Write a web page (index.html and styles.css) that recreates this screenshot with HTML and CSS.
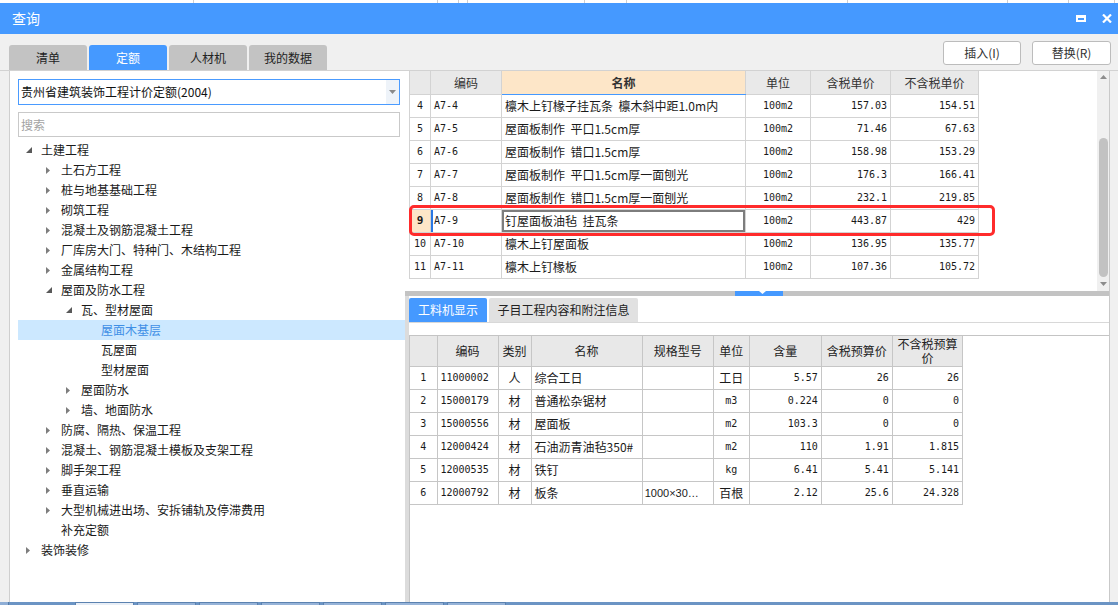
FILE: index.html
```html
<!DOCTYPE html>
<html lang="zh-CN">
<head>
<meta charset="utf-8">
<title>查询</title>
<link rel="stylesheet" href="styles.css">
</head>
<body>
<div class="app">
  <div class="topstrip"><span></span><span></span><span></span><span></span><span></span><span></span><span></span><span></span><span></span><span></span><span></span></div>
  <div class="titlebar">
    <span class="title">查询</span>
    <div class="winctl">
      <svg class="ico-max" width="10" height="7" viewBox="0 0 10 7"><path fill="#fff" fill-rule="evenodd" d="M0 0H10V7H0Z M2 3H8V5H2Z"/></svg>
      <svg class="ico-close" width="10" height="9" viewBox="0 0 10 9"><path d="M1 0.5L9 8.5M9 0.5L1 8.5" stroke="#fff" stroke-width="2.2"/></svg>
    </div>
  </div>
  <div class="toolbar">
    <div class="tabs">
      <div class="tab">清单</div>
      <div class="tab active">定额</div>
      <div class="tab">人材机</div>
      <div class="tab">我的数据</div>
    </div>
    <div class="btns">
      <div class="btn">插入(I)</div>
      <div class="btn btn2">替换(R)</div>
    </div>
  </div>
  <div class="main">
    <div class="left">
      <div class="select">
        <div class="select-text">贵州省建筑装饰工程计价定额(2004)</div>
        <div class="select-arrow"><svg width="7" height="4" viewBox="0 0 7 4"><path d="M0 0H7L3.5 4Z" fill="#8a8a8a"/></svg></div>
      </div>
      <div class="search">搜索</div>
      <div class="tree">
        <div class="node l0"><span class="tog"><svg width="6" height="6" viewBox="0 0 6 6"><path d="M6 0V6H0Z" fill="#595959"/></svg></span><span>土建工程</span></div>
        <div class="node l1"><span class="tog"><svg width="4" height="7" viewBox="0 0 4 7"><path d="M0 0L4 3.5L0 7Z" fill="#7d7d7d"/></svg></span><span>土石方工程</span></div>
        <div class="node l1"><span class="tog"><svg width="4" height="7" viewBox="0 0 4 7"><path d="M0 0L4 3.5L0 7Z" fill="#7d7d7d"/></svg></span><span>桩与地基基础工程</span></div>
        <div class="node l1"><span class="tog"><svg width="4" height="7" viewBox="0 0 4 7"><path d="M0 0L4 3.5L0 7Z" fill="#7d7d7d"/></svg></span><span>砌筑工程</span></div>
        <div class="node l1"><span class="tog"><svg width="4" height="7" viewBox="0 0 4 7"><path d="M0 0L4 3.5L0 7Z" fill="#7d7d7d"/></svg></span><span>混凝土及钢筋混凝土工程</span></div>
        <div class="node l1"><span class="tog"><svg width="4" height="7" viewBox="0 0 4 7"><path d="M0 0L4 3.5L0 7Z" fill="#7d7d7d"/></svg></span><span>厂库房大门、特种门、木结构工程</span></div>
        <div class="node l1"><span class="tog"><svg width="4" height="7" viewBox="0 0 4 7"><path d="M0 0L4 3.5L0 7Z" fill="#7d7d7d"/></svg></span><span>金属结构工程</span></div>
        <div class="node l1"><span class="tog"><svg width="6" height="6" viewBox="0 0 6 6"><path d="M6 0V6H0Z" fill="#595959"/></svg></span><span>屋面及防水工程</span></div>
        <div class="node l2"><span class="tog"><svg width="6" height="6" viewBox="0 0 6 6"><path d="M6 0V6H0Z" fill="#595959"/></svg></span><span>瓦、型材屋面</span></div>
        <div class="node l3 sel"><span class="tog"></span><span>屋面木基层</span></div>
        <div class="node l3"><span class="tog"></span><span>瓦屋面</span></div>
        <div class="node l3"><span class="tog"></span><span>型材屋面</span></div>
        <div class="node l2"><span class="tog"><svg width="4" height="7" viewBox="0 0 4 7"><path d="M0 0L4 3.5L0 7Z" fill="#7d7d7d"/></svg></span><span>屋面防水</span></div>
        <div class="node l2"><span class="tog"><svg width="4" height="7" viewBox="0 0 4 7"><path d="M0 0L4 3.5L0 7Z" fill="#7d7d7d"/></svg></span><span>墙、地面防水</span></div>
        <div class="node l1"><span class="tog"><svg width="4" height="7" viewBox="0 0 4 7"><path d="M0 0L4 3.5L0 7Z" fill="#7d7d7d"/></svg></span><span>防腐、隔热、保温工程</span></div>
        <div class="node l1"><span class="tog"><svg width="4" height="7" viewBox="0 0 4 7"><path d="M0 0L4 3.5L0 7Z" fill="#7d7d7d"/></svg></span><span>混凝土、钢筋混凝土模板及支架工程</span></div>
        <div class="node l1"><span class="tog"><svg width="4" height="7" viewBox="0 0 4 7"><path d="M0 0L4 3.5L0 7Z" fill="#7d7d7d"/></svg></span><span>脚手架工程</span></div>
        <div class="node l1"><span class="tog"><svg width="4" height="7" viewBox="0 0 4 7"><path d="M0 0L4 3.5L0 7Z" fill="#7d7d7d"/></svg></span><span>垂直运输</span></div>
        <div class="node l1"><span class="tog"><svg width="4" height="7" viewBox="0 0 4 7"><path d="M0 0L4 3.5L0 7Z" fill="#7d7d7d"/></svg></span><span>大型机械进出场、安拆铺轨及停滞费用</span></div>
        <div class="node l1"><span class="tog"></span><span>补充定额</span></div>
        <div class="node l0"><span class="tog"><svg width="4" height="7" viewBox="0 0 4 7"><path d="M0 0L4 3.5L0 7Z" fill="#7d7d7d"/></svg></span><span>装饰装修</span></div>
      </div>
    </div>
    <div class="right">
      <div class="upper">
        <div class="gridwrap">
          <table class="g1">
            <colgroup><col class="c1"><col class="c2"><col class="c3"><col class="c4"><col class="c5"><col class="c6"></colgroup>
            <thead>
              <tr><th></th><th>编码</th><th class="hname">名称</th><th>单位</th><th>含税单价</th><th>不含税单价</th></tr>
            </thead>
            <tbody>
              <tr><td class="rn">4</td><td class="mono">A7-4</td><td>檩木上钉椽子挂瓦条&nbsp; 檩木斜中距1.0m内</td><td class="mono ctr">100m2</td><td class="mono r">157.03</td><td class="mono r">154.51</td></tr>
              <tr><td class="rn">5</td><td class="mono">A7-5</td><td>屋面板制作&nbsp; 平口1.5cm厚</td><td class="mono ctr">100m2</td><td class="mono r">71.46</td><td class="mono r">67.63</td></tr>
              <tr><td class="rn">6</td><td class="mono">A7-6</td><td>屋面板制作&nbsp; 错口1.5cm厚</td><td class="mono ctr">100m2</td><td class="mono r">158.98</td><td class="mono r">153.29</td></tr>
              <tr><td class="rn">7</td><td class="mono">A7-7</td><td>屋面板制作&nbsp; 平口1.5cm厚一面刨光</td><td class="mono ctr">100m2</td><td class="mono r">176.3</td><td class="mono r">166.41</td></tr>
              <tr><td class="rn">8</td><td class="mono">A7-8</td><td>屋面板制作&nbsp; 错口1.5cm厚一面刨光</td><td class="mono ctr">100m2</td><td class="mono r">232.1</td><td class="mono r">219.85</td></tr>
              <tr class="cur"><td class="rn rn-cur">9</td><td class="mono code-cur">A7-9</td><td class="name-cur">钉屋面板油毡&nbsp; 挂瓦条</td><td class="mono ctr">100m2</td><td class="mono r">443.87</td><td class="mono r">429</td></tr>
              <tr><td class="rn">10</td><td class="mono">A7-10</td><td>檩木上钉屋面板</td><td class="mono ctr">100m2</td><td class="mono r">136.95</td><td class="mono r">135.77</td></tr>
              <tr><td class="rn">11</td><td class="mono">A7-11</td><td>檩木上钉椽板</td><td class="mono ctr">100m2</td><td class="mono r">107.36</td><td class="mono r">105.72</td></tr>
            </tbody>
          </table>
          <div class="redbox"></div>
        </div>
        <div class="vscroll">
          <svg class="arr-up" width="7" height="4" viewBox="0 0 7 4"><path d="M0 4L3.5 0L7 4Z" fill="#8c8c8c"/></svg>
          <div class="thumb"></div>
          <svg class="arr-down" width="7" height="4" viewBox="0 0 7 4"><path d="M0 0H7L3.5 4Z" fill="#8c8c8c"/></svg>
        </div>
      </div>
      <div class="splitter"><div class="grip"><svg width="7" height="3" viewBox="0 0 7 3"><path d="M0 0H7L3.5 3Z" fill="#fff"/></svg></div></div>
      <div class="lower">
        <div class="ltabs">
          <div class="ltab active">工料机显示</div>
          <div class="ltab ltab2">子目工程内容和附注信息</div>
        </div>
        <div class="lbox">
          <div class="lstrip"></div>
          <div class="lgrid">
            <table class="g2">
              <colgroup><col class="d1"><col class="d2"><col class="d3"><col class="d4"><col class="d5"><col class="d6"><col class="d7"><col class="d8"><col class="d9"></colgroup>
              <thead>
                <tr><th></th><th>编码</th><th>类别</th><th>名称</th><th>规格型号</th><th>单位</th><th>含量</th><th>含税预算价</th><th class="wrap">不含税预算<br>价</th></tr>
              </thead>
              <tbody>
                <tr><td class="ctr mono">1</td><td class="mono">11000002</td><td class="ctr">人</td><td>综合工日</td><td></td><td class="ctr">工日</td><td class="mono r">5.57</td><td class="mono r">26</td><td class="mono r">26</td></tr>
                <tr><td class="ctr mono">2</td><td class="mono">15000179</td><td class="ctr">材</td><td>普通松杂锯材</td><td></td><td class="ctr mono">m3</td><td class="mono r">0.224</td><td class="mono r">0</td><td class="mono r">0</td></tr>
                <tr><td class="ctr mono">3</td><td class="mono">15000556</td><td class="ctr">材</td><td>屋面板</td><td></td><td class="ctr mono">m2</td><td class="mono r">103.3</td><td class="mono r">0</td><td class="mono r">0</td></tr>
                <tr><td class="ctr mono">4</td><td class="mono">12000424</td><td class="ctr">材</td><td>石油沥青油毡350#</td><td></td><td class="ctr mono">m2</td><td class="mono r">110</td><td class="mono r">1.91</td><td class="mono r">1.815</td></tr>
                <tr><td class="ctr mono">5</td><td class="mono">12000535</td><td class="ctr">材</td><td>铁钉</td><td></td><td class="ctr mono">kg</td><td class="mono r">6.41</td><td class="mono r">5.41</td><td class="mono r">5.141</td></tr>
                <tr><td class="ctr mono">6</td><td class="mono">12000792</td><td class="ctr">材</td><td>板条</td><td class="spec">1000×30…</td><td class="ctr">百根</td><td class="mono r">2.12</td><td class="mono r">25.6</td><td class="mono r">24.328</td></tr>
              </tbody>
            </table>
          </div>
        </div>
      </div>
    </div>
  </div>
  <div class="taskbar"><span class="tb0"></span><span class="tb tb-first"></span><span class="tb"></span><span class="tb"></span><span class="tb"></span><span class="tb"></span><span class="tb"></span><span class="tb"></span></div>
</div>
</body>
</html>
```

FILE: styles.css
```css
html, body {
  margin: 0;
  padding: 0;
}
body {
  width: 1118px;
  height: 605px;
  overflow: hidden;
  background: #f0f0f0;
  font-family: "Noto Sans CJK SC", "Noto Sans", sans-serif;
  font-size: 12px;
  color: #1e1e1e;
}
.app {
  display: flex;
  flex-direction: column;
  height: 605px;
}

/* strip of the window underneath */
.topstrip {
  height: 3px;
  background: #fff;
  display: flex;
}
.topstrip span {
  box-sizing: border-box;
  border-right: 1px solid #cfcfcf;
  height: 3px;
}
.topstrip span:nth-child(1) { width: 194px; }
.topstrip span:nth-child(2) { width: 244px; }
.topstrip span:nth-child(3) { width: 21px; }
.topstrip span:nth-child(4) { width: 9px; }
.topstrip span:nth-child(5) { width: 117px; }
.topstrip span:nth-child(6) { width: 42px; }
.topstrip span:nth-child(7) { width: 221px; }
.topstrip span:nth-child(8) { width: 160px; }
.topstrip span:nth-child(9) { width: 61px; }
.topstrip span:nth-child(10) { width: 46px; }
.topstrip span:nth-child(11) { flex: 1; border-right: none; }

/* title bar */
.titlebar {
  height: 31px;
  background: #4599ff;
  display: flex;
  align-items: center;
  justify-content: space-between;
  padding: 0 6px 0 12px;
  color: #fff;
}
.title {
  font-size: 14px;
  line-height: 31px;
}
.winctl {
  display: flex;
  align-items: center;
  gap: 16px;
}
.ico-max { display: block; margin-top: -1px; }
.ico-close { display: block; }

/* toolbar with tabs and buttons */
.toolbar {
  height: 36px;
  display: flex;
  justify-content: space-between;
  padding: 0 7px 0 9px;
}
.tabs {
  display: flex;
  gap: 2px;
  align-self: flex-end;
}
.tab {
  width: 78px;
  height: 25px;
  line-height: 25px;
  text-align: center;
  background: #c3c3c3;
  border-radius: 3px 3px 0 0;
  color: #222;
}
.tab.active {
  background: #4599ff;
  color: #fff;
}
.btns {
  display: flex;
  gap: 11px;
  padding-top: 7px;
}
.btn {
  width: 78px;
  height: 24px;
  box-sizing: border-box;
  border: 1px solid #bcbcbc;
  border-radius: 3px;
  background: #fff;
  text-align: center;
  line-height: 22px;
  color: #333;
}
.btn2 { width: 79px; }

/* main */
.main {
  height: 532px;
  box-sizing: border-box;
  border-top: 1px solid #d2d2d2;
  display: flex;
  padding: 0 8px 0 9px;
}

/* left pane */
.left {
  width: 396px;
  flex: none;
  box-sizing: border-box;
  background: #fff;
  border-left: 1px solid #cfcfcf;
  display: flex;
  flex-direction: column;
}
.select {
  margin: 8px 0 0 8px;
  width: 382px;
  height: 26px;
  box-sizing: border-box;
  border: 1px solid #4a9bff;
  display: flex;
}
.select-text {
  flex: 1;
  padding-left: 2px;
  line-height: 24px;
  color: #111;
}
.select-arrow {
  width: 13px;
  background: #eef3f9;
  display: flex;
  align-items: center;
  justify-content: center;
}
.search {
  margin: 7px 0 0 8px;
  width: 382px;
  height: 25px;
  box-sizing: border-box;
  border: 1px solid #c9c9c9;
  color: #a3a3a3;
  line-height: 23px;
  padding-left: 2px;
}
.tree {
  margin-top: 3px;
}
.node {
  height: 20px;
  margin-left: 8px;
  display: flex;
  align-items: center;
  line-height: 20px;
  white-space: nowrap;
  color: #1a1a1a;
}
.node.l0 { padding-left: 8px; }
.node.l1 { padding-left: 28px; }
.node.l2 { padding-left: 48px; }
.node.l3 { padding-left: 68px; }
.tog {
  width: 15px;
  height: 20px;
  flex: none;
  display: flex;
  align-items: center;
}
.tog svg { display: block; }
.node.sel {
  background: #cce8ff;
  color: #3f8fe6;
}

/* right pane */
.right {
  flex: 1;
  min-width: 0;
  background: #fff;
  display: flex;
  flex-direction: column;
  border-right: 1px solid #c9c9c9;
}
.upper {
  height: 220px;
  display: flex;
}
.gridwrap {
  flex: 1;
  position: relative;
  padding-left: 4px;
  overflow: hidden;
}
.g1, .g2 {
  border-collapse: collapse;
  table-layout: fixed;
}
.g1 { width: 570px; }
.g1 .c1 { width: 21px; }
.g1 .c2 { width: 71px; }
.g1 .c3 { width: 244px; }
.g1 .c4 { width: 65px; }
.g1 .c5 { width: 80px; }
.g1 .c6 { width: 88px; }
.g1 th, .g1 td {
  border: 1px solid #d3d3d3;
  padding: 0 3px;
  white-space: nowrap;
  overflow: hidden;
  font-weight: normal;
  color: #1a1a1a;
}
.g1 tr { height: 23px; }
.g1 thead th {
  border-top: none;
  background: #e9e9e9;
  color: #333;
  text-align: center;
}
.g1 thead th.hname {
  background: #fde6c8;
  font-weight: bold;
  border-bottom: 1px solid #4599ff;
  color: #333;
}
.mono {
  font-family: "DejaVu Sans Mono", "Liberation Mono", monospace;
  font-size: 10px;
}
.r { text-align: right; }
.ctr { text-align: center; }
.g1 td.rn {
  text-align: center;
  padding: 0;
  font-family: "DejaVu Sans Mono", "Liberation Mono", monospace;
  font-size: 10px;
}
.g1 td.rn-cur {
  background: #fde6c8;
  font-weight: bold;
  font-size: 11px;
}
.g1 td.code-cur {
  box-shadow: inset 2px 0 0 #2a78e4;
}
.g1 td.name-cur {
  box-shadow: inset 0 0 0 2px #7d7d7d;
}
.redbox {
  position: absolute;
  left: 4px;
  top: 134px;
  width: 586px;
  height: 31px;
  box-sizing: border-box;
  border: 3px solid #ff2b2b;
  border-radius: 5px;
}
.vscroll {
  width: 12px;
  background: #f0f0f0;
  display: flex;
  flex-direction: column;
  align-items: center;
}
.arr-up { display: block; margin-top: 4px; }
.thumb {
  width: 9px;
  height: 139px;
  margin-top: 59px;
  border-radius: 5px;
  background: #c2c2c2;
}
.arr-down { display: block; margin-top: 5px; }

.splitter {
  height: 5px;
  background: #c3c3c3;
  display: flex;
}
.grip {
  margin-left: 330px;
  width: 48px;
  height: 5px;
  background: #4599ff;
  display: flex;
  justify-content: center;
  align-items: flex-start;
}
.grip svg { display: block; margin-left: 6px; }

/* lower pane */
.lower {
  flex: 1;
  display: flex;
  flex-direction: column;
  border-left: 4px solid #dcdcdc;
}
.ltabs {
  display: flex;
  gap: 2px;
  padding-top: 2px;
}
.ltab {
  height: 24px;
  line-height: 24px;
  text-align: center;
  background: #e1e1e1;
  border-radius: 2px 2px 0 0;
  color: #222;
}
.ltab.active {
  width: 78px;
  background: #4599ff;
  color: #fff;
}
.ltab2 { width: 149px; }
.lbox {
  flex: 1;
  border-top: 1px solid #d8d8d8;
  display: flex;
  flex-direction: column;
}
.lstrip { height: 12px; }
.lgrid {
  flex: 1;
  border-top: 1px solid #c4c4c4;
  border-left: 1px solid #c4c4c4;
}
.g2 { width: 553px; }
.g2 .d1 { width: 27px; }
.g2 .d2 { width: 61px; }
.g2 .d3 { width: 33px; }
.g2 .d4 { width: 111px; }
.g2 .d5 { width: 71px; }
.g2 .d6 { width: 36px; }
.g2 .d7 { width: 72px; }
.g2 .d8 { width: 71px; }
.g2 .d9 { width: 70px; }
.g2 th, .g2 td {
  border: 1px solid #c6c6c6;
  padding: 0 3px;
  white-space: nowrap;
  overflow: hidden;
  font-weight: normal;
  color: #1a1a1a;
}
.g2 th:first-child, .g2 td:first-child { border-left: none; }
.g2 tr { height: 23px; }
.g2 thead tr { height: 30px; }
.g2 thead th {
  border-top: none;
  background: #e8e8e8;
  text-align: center;
  color: #222;
  padding: 0;
}
.g2 thead th.wrap {
  padding: 0;
  line-height: 14px;
  vertical-align: middle;
}
.g2 td.spec {
  font-family: "Liberation Sans", sans-serif;
  font-size: 11px;
  padding-left: 2px;
}

/* taskbar below */
.taskbar {
  height: 3px;
  background: #6b94c4;
  display: flex;
}
.tb0 {
  width: 9px;
  box-sizing: border-box;
  background: #8eaed6;
  border-right: 1px solid #557ba8;
}
.tb {
  width: 59px;
  margin-left: 3px;
  box-sizing: border-box;
  background: #96b3d8;
  border: 1px solid #5b82b0;
  border-bottom: none;
}
.tb-first {
  margin-left: 66px;
  background: #e8eef6;
}
```
